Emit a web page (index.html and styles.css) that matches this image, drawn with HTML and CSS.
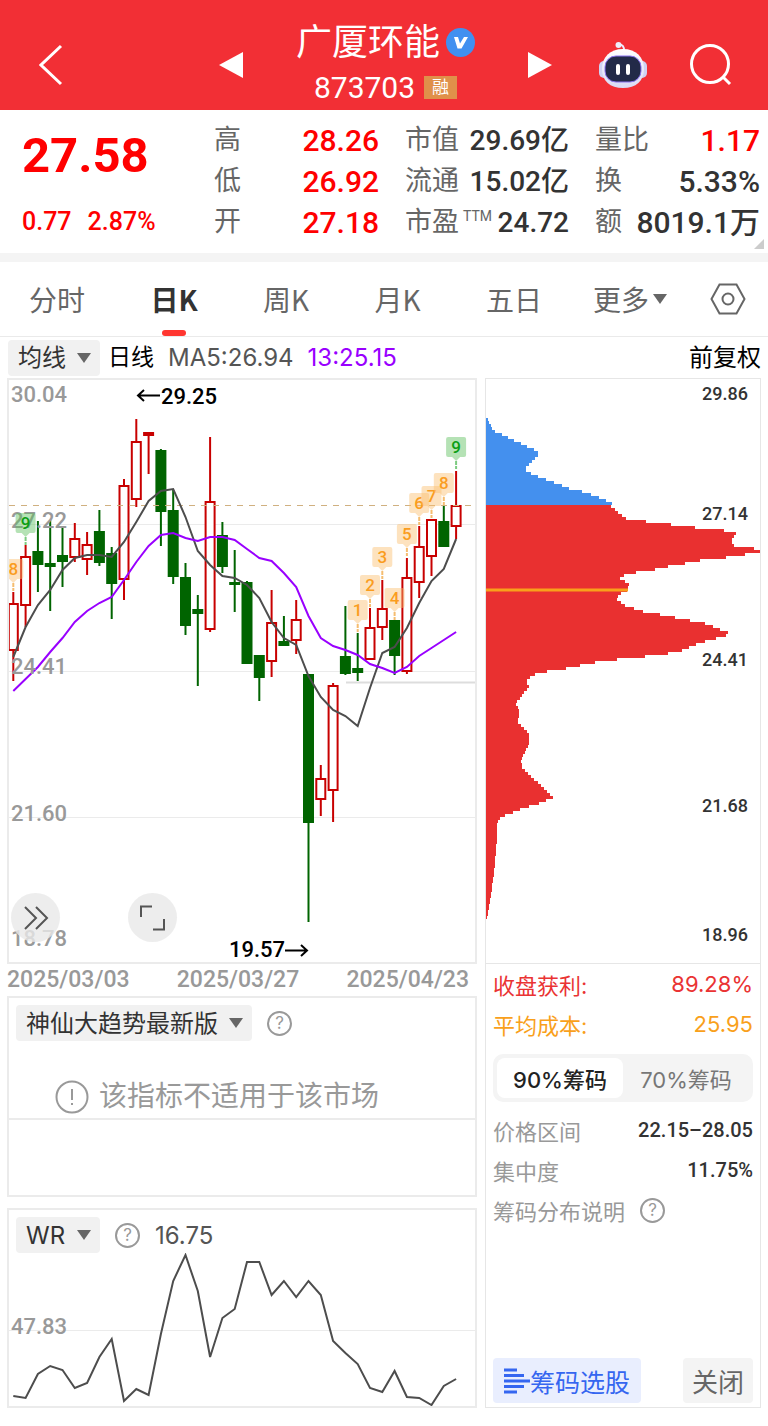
FILE: index.html
```html
<!DOCTYPE html>
<html lang="zh-CN">

<head>
    <meta charset="UTF-8">
    <meta name="viewport" content="width=device-width, initial-scale=1">
    <title>广厦环能 873703</title>
    <link rel="stylesheet" href="styles.css">
</head>

<body>
    <header class="topbar">
        <a class="back" href="#" aria-label="返回">
            <svg width="24" height="42" viewBox="0 0 24 42"><path d="M22 2 2 21 22 40" /></svg>
        </a>
        <div class="stock-nav">
            <button class="step" aria-label="上一只"><svg width="24" height="26" viewBox="0 0 24 26"><path d="M24 0V26L0 13Z" /></svg></button>
            <div class="stock">
                <div class="stock-line">
                    <h1>广厦环能</h1>
                    <svg class="verified" width="29" height="29" viewBox="0 0 29 29">
                        <circle cx="14.5" cy="14.5" r="14.5" fill="#4190f0" />
                        <path d="M8 9H12L14 15.500 18 9H22L15.500 20.500H11.500Z" fill="#fff" />
                    </svg>
                </div>
                <div class="stock-line"><span class="code">873703</span><span class="tag">融</span></div>
            </div>
            <button class="step" aria-label="下一只"><svg width="24" height="26" viewBox="0 0 24 26"><path d="M0 0V26L24 13Z" /></svg></button>
        </div>
        <div class="actions">
            <button aria-label="智能助手">
                <svg width="50" height="48" viewBox="0 0 50 48">
                    <defs>
                        <linearGradient id="shell" x1="0" y1="0" x2="0" y2="1">
                            <stop offset="0" stop-color="#fff" />
                            <stop offset="1" stop-color="#d9daf4" />
                        </linearGradient>
                    </defs>
                    <path d="M26 11C27 6 24 3 20.500 3.500" fill="none" stroke="#eef" stroke-width="2" />
                    <circle cx="20.500" cy="4" r="3" fill="#eeeefb" />
                    <rect x="1" y="20" width="10" height="17" rx="5" fill="#cfd2f2" />
                    <rect x="39" y="20" width="10" height="17" rx="5" fill="#cfd2f2" />
                    <path d="M25 8C38 8 46 16 46 28S38 47 25 47 4 40 4 28 12 8 25 8Z" fill="url(#shell)" />
                    <rect x="7" y="15" width="36" height="26" rx="11" fill="#222a48" stroke="#8a72ee" stroke-width="1" />
                    <path d="M20 25V32M30 25V32" stroke="#fff" stroke-width="4" stroke-linecap="round" />
                </svg>
            </button>
            <button aria-label="搜索">
                <svg class="search" width="42" height="42" viewBox="0 0 42 42"><circle cx="20" cy="20" r="18.500" /><path d="M33 33 40 40" /></svg>
            </button>
        </div>
    </header>

    <section class="quote">
        <div class="price">
            <strong>27.58</strong>
            <div class="change"><span>0.77</span><span>2.87%</span></div>
        </div>
        <dl class="big up">
            <div><dt>高</dt><dd>28.26</dd></div>
            <div><dt>低</dt><dd>26.92</dd></div>
            <div><dt>开</dt><dd>27.18</dd></div>
        </dl>
        <dl>
            <div><dt>市值</dt><dd>29.69亿</dd></div>
            <div><dt>流通</dt><dd>15.02亿</dd></div>
            <div><dt>市盈<sup>TTM</sup></dt><dd>24.72</dd></div>
        </dl>
        <dl class="big">
            <div><dt>量比</dt><dd class="red">1.17</dd></div>
            <div><dt>换</dt><dd>5.33%</dd></div>
            <div><dt>额</dt><dd>8019.1万</dd></div>
        </dl>
    </section>

    <nav class="tabs">
        <div class="periods">
            <button>分时</button>
            <button class="active">日K</button>
            <button>周K</button>
            <button>月K</button>
            <button>五日</button>
        </div>
        <button class="more">更多<i class="caret"></i></button>
        <button class="settings" aria-label="设置">
            <svg width="36" height="32" viewBox="0 0 36 32"><path d="M9.500 1.500H26.500L34.500 16 26.500 30.500H9.500L1.500 16Z" /><circle cx="18" cy="16" r="5.500" /></svg>
        </button>
    </nav>

    <div class="toolbar">
        <label class="picker"><select aria-label="主图指标"><option>均线</option></select></label>
        <span class="cycle">日线</span>
        <span class="ma5">MA5:26.94</span>
        <span class="ma13">13:25.15</span>
        <span class="adjust">前复权</span>
    </div>

    <main class="board">
        <div class="left">
            <div class="panel kline">
                <svg id="kline" viewBox="9 380 466 582">
                    <path class="grid" d="M9 524.500H475M9 671.500H475M9 817.500H475" />
                    <path class="support" d="M346 682.500H475" />
                    <g id="candles"></g>
                    <path class="current" d="M9 505.500H475" />
                    <polyline class="line" id="lineMa5" />
                    <polyline class="line violet" id="lineMa13" />
                    <g class="axis">
                        <text x="11" y="402">30.04</text>
                        <text x="11" y="528">27.22</text>
                        <text x="11" y="674">24.41</text>
                        <text x="11" y="821">21.60</text>
                        <text x="11" y="946">18.78</text>
                    </g>
                    <g id="marks"></g>
                    <g class="extreme">
                        <text x="161" y="404">29.25</text>
                        <path d="M160 395.500H138M144 390 138 395.500 144 401" />
                        <text x="229" y="957">19.57</text>
                        <path d="M285 950.500H307M301 945 307 950.500 301 956" />
                    </g>
                </svg>
                <div class="float">
                    <button aria-label="展开"><svg width="49" height="49" viewBox="0 0 49 49"><path d="M14 14 25 25 14 36M25 14 36 25 25 36" /></svg></button>
                    <button aria-label="全屏"><svg width="49" height="49" viewBox="0 0 49 49"><path d="M13 24V13.500H24M36 26V36.500H25" /></svg></button>
                </div>
            </div>
            <div class="dates"><span>2025/03/03</span><span>2025/03/27</span><span>2025/04/23</span></div>

            <div class="panel trend">
                <div class="panel-head">
                    <label class="picker"><select aria-label="副图指标一"><option>神仙大趋势最新版</option></select></label>
                    <button class="help" aria-label="指标说明">?</button>
                </div>
                <p class="notice">
                    <svg width="34" height="34" viewBox="0 0 34 34"><circle cx="17" cy="17" r="15.500" /><path d="M17 9V20M17 23V25" /></svg>
                    该指标不适用于该市场
                </p>
            </div>

            <div class="panel">
                <div class="panel-head">
                    <label class="picker"><select aria-label="副图指标二"><option>WR</option></select></label>
                    <button class="help" aria-label="WR说明">?</button>
                    <span class="wr-value">16.75</span>
                </div>
                <svg viewBox="9 1254 466 153">
                    <path class="grid" d="M9 1331.500H475" />
                    <g class="axis"><text x="11" y="1335">47.83</text></g>
                    <polyline class="line" id="lineWr" />
                </svg>
            </div>
        </div>

        <aside class="chips">
            <svg viewBox="486 379 274 584">
                <path id="chipsAbove" class="above" />
                <path id="chipsBelow" class="below" />
                <path class="cost" d="M486 590H628" />
                <g class="levels">
                    <text x="748" y="400">29.86</text>
                    <text x="748" y="520">27.14</text>
                    <text x="748" y="666">24.41</text>
                    <text x="748" y="812">21.68</text>
                    <text x="748" y="941">18.96</text>
                </g>
            </svg>
            <div class="chips-info">
                <div class="row profit"><span>收盘获利:</span><span>89.28%</span></div>
                <div class="row cost-row"><span>平均成本:</span><span>25.95</span></div>
                <div class="segment">
                    <button class="on">90%筹码</button>
                    <button>70%筹码</button>
                </div>
                <div class="row"><span>价格区间</span><b>22.15–28.05</b></div>
                <div class="row"><span>集中度</span><b>11.75%</b></div>
                <div class="row explain"><span>筹码分布说明</span><button class="help" aria-label="筹码分布说明">?</button></div>
            </div>
            <div class="chips-foot">
                <button class="pick">
                    <svg width="26" height="26" viewBox="0 0 26 26"><path d="M0 2H13M0 7.500H20M0 13H26M0 18.500H20M0 24H13" /></svg>筹码选股
                </button>
                <button class="close">关闭</button>
            </div>
        </aside>
    </main>
    <script src="chart.js"></script>
</body>

</html>
```
FILE: styles.css
```css
* {
    box-sizing: border-box;
}

body {
    margin: 0;
    background: #fff;
    color: #333;
    font-family: Roboto, "Noto Sans CJK SC", sans-serif;
}

button {
    border: 0;
    padding: 0;
    background: none;
    color: inherit;
    font: inherit;
    cursor: pointer;
}

svg {
    display: block;
}

/* header */
.topbar {
    display: grid;
    grid-template-columns: 1fr 334px 1fr;
    align-items: center;
    padding: 20px 36px 0 39px;
    background: #f22f35;
    color: #fff;
}

.back path,
.search {
    fill: none;
    stroke: #fff;
    stroke-width: 3;
}

.stock-nav,
.stock-line,
.actions {
    display: flex;
    align-items: center;
}

.stock-nav {
    justify-content: space-between;
}

.step svg {
    fill: #fff;
}

.stock-line {
    justify-content: center;
    height: 45px;
    gap: 6px;
}

h1 {
    margin: 0;
    font-size: 36px;
    font-weight: 400;
    line-height: 48px;
}

.code {
    font-size: 30px;
}

.tag {
    margin-left: 3px;
    padding: 0 8px;
    background: #e0904a;
    font-size: 17px;
    line-height: 23px;
}

.actions {
    justify-content: flex-end;
    gap: 42px;
}

/* quote */
.quote {
    position: relative;
    display: grid;
    grid-template-columns: 166fr 165fr 164fr 165fr;
    column-gap: 26px;
    padding: 10px 8px 10px 22px;
    border-bottom: 9px solid #f4f4f4;
}

.quote::after {
    content: "";
    position: absolute;
    right: 4px;
    bottom: 4px;
    border: 5px solid;
    border-color: transparent #ccc #ccc transparent;
}

.price {
    color: #f00;
    font-weight: 500;
}

.price strong {
    display: block;
    font-size: 49px;
    font-weight: 700;
    line-height: 72px;
}

.change {
    display: flex;
    gap: 16px;
    padding-top: 9px;
    font-size: 25px;
    line-height: 41px;
}

dl {
    margin: 0;
    line-height: 41px;
}

dl div {
    display: flex;
    justify-content: space-between;
    height: 41px;
    white-space: nowrap;
}

dt {
    color: #666;
    font-size: 27px;
}

dd {
    margin: 0;
    font-size: 28px;
    font-weight: 500;
}

.big dd {
    font-size: 30px;
}

.up dd,
dd.red {
    color: #f00;
}

sup {
    margin-left: 4px;
    font-size: 14px;
    line-height: 0;
}

/* tabs */
.tabs {
    display: flex;
    align-items: center;
    height: 75px;
    padding: 0 22px 0 29px;
    border-bottom: 1px solid #eaeaea;
    color: #666;
    font-family: "Noto Sans CJK SC", sans-serif;
    font-size: 28px;
}

.periods {
    display: flex;
    flex: 1;
    justify-content: space-between;
    height: 100%;
}

.periods .active {
    position: relative;
    color: #333;
    font-weight: 700;
}

.periods .active::after {
    content: "";
    position: absolute;
    left: 50%;
    bottom: 0;
    width: 24px;
    height: 6px;
    margin-left: -12px;
    border-radius: 3px;
    background: #ff3630;
}

.more {
    display: flex;
    align-items: center;
    gap: 4px;
    margin: 0 43px 0 51px;
}

.caret,
.picker::after {
    border: 7px solid transparent;
    border-top: 10px solid #666;
    border-bottom: 0;
}

.settings svg {
    fill: none;
    stroke: #666;
    stroke-width: 2;
}

/* indicator bar */
.toolbar {
    display: flex;
    align-items: center;
    height: 41px;
    padding: 0 7px 0 8px;
    font-size: 24px;
    line-height: 36px;
}

.picker {
    position: relative;
    display: block;
}

.picker::after {
    content: "";
    position: absolute;
    top: 13px;
    right: 9px;
    pointer-events: none;
}

.picker select {
    display: block;
    height: 36px;
    padding: 0 34px 0 10px;
    border: 0;
    border-radius: 4px;
    appearance: none;
    background: #f1f1f1;
    color: #333;
    font-family: Inter, "Noto Sans CJK SC", sans-serif;
    font-size: 24px;
}

.cycle {
    margin-left: 8px;
    color: #000;
    font-size: 23px;
}

.ma5,
.ma13 {
    margin-left: 14px;
    color: #555;
    font-family: Inter, sans-serif;
    font-size: 24px;
}

.ma13 {
    color: #90f;
}

.adjust {
    margin-left: auto;
    color: #000;
}

/* charts */
.board {
    display: grid;
    grid-template-columns: 470fr 276fr;
    gap: 8px;
    padding: 0 7px 17px;
}

.panel {
    border: 2px solid #ebebeb;
}

.kline {
    position: relative;
}

.grid {
    stroke: #ebebeb;
}

.support {
    stroke: #ddd;
    stroke-width: 2;
}

.current {
    stroke: #d0b080;
    stroke-dasharray: 6 6;
}

.line {
    fill: none;
    stroke: #4d4d4d;
    stroke-width: 2;
}

.violet {
    stroke: #90f;
}

.rise {
    fill: #fff;
    stroke: #c80000;
    stroke-width: 2;
}

.fall {
    fill: #006400;
    stroke: #006400;
    stroke-width: 2;
}

.axis {
    fill: #999;
    font-size: 22px;
    font-weight: 500;
}

.extreme {
    fill: #000;
    font-size: 22px;
    font-weight: 500;
}

.extreme path {
    fill: none;
    stroke: #000;
    stroke-width: 2;
}

.mark {
    fill: #fa9d1f;
    font-size: 17px;
    font-weight: 500;
    text-anchor: middle;
}

.mark path {
    fill: rgba(251, 190, 110, 0.45);
}

.mark line {
    stroke: #f5bd70;
    stroke-width: 2;
    stroke-dasharray: 4 1;
}

.mark.nine {
    fill: #0a9e14;
}

.mark.nine path {
    fill: rgba(90, 190, 90, 0.45);
}

.mark.nine line {
    stroke: #7ccb80;
}

.float {
    position: absolute;
    left: 2px;
    bottom: 20px;
    display: flex;
    gap: 68px;
}

.float button {
    border-radius: 50%;
    background: rgba(232, 232, 232, 0.8);
}

.float path {
    fill: none;
    stroke: #555;
    stroke-width: 2;
}

.dates {
    display: flex;
    justify-content: space-between;
    padding-right: 8px;
    color: #999;
    font-size: 23px;
    font-weight: 500;
    line-height: 32px;
}

.trend {
    height: 201px;
    margin-bottom: 11px;
}

.panel-head {
    display: flex;
    align-items: center;
    padding: 7px 7px 0;
}

.help {
    width: 25px;
    height: 25px;
    margin-left: 15px;
    border: 2px solid #999;
    border-radius: 50%;
    color: #999;
    font-family: Inter, sans-serif;
    font-size: 17px;
    line-height: 21px;
}

.notice {
    display: flex;
    align-items: center;
    gap: 10px;
    height: 79px;
    margin: 0;
    padding: 34px 0 0 46px;
    border-bottom: 2px solid #ebebeb;
    color: #999;
    font-size: 28px;
    line-height: 44px;
}

.notice svg {
    fill: none;
    stroke: #999;
    stroke-width: 2;
}

.wr-value {
    margin-left: 15px;
    color: #555;
    font-family: Inter, sans-serif;
    font-size: 24px;
}

/* chip distribution */
.chips {
    display: flex;
    flex-direction: column;
    border: 1px solid #e6e6e6;
}

.above {
    fill: #4490ee;
}

.below {
    fill: #e93030;
}

.cost {
    stroke: #f9a01b;
    stroke-width: 3;
}

.levels {
    fill: #333;
    font-size: 18px;
    font-weight: 500;
    text-anchor: end;
}

.chips-info {
    flex: 1;
    padding: 0 7px;
    border-top: 1px solid #e6e6e6;
}

.row {
    display: flex;
    justify-content: space-between;
    align-items: center;
    height: 40px;
    color: #999;
    font-size: 22px;
}

.row b {
    color: #333;
    font-size: 20px;
    font-weight: 500;
}

.profit,
.cost-row {
    font-family: Inter, "Noto Sans CJK SC", sans-serif;
}

.profit {
    color: #ea3333;
}

.cost-row {
    color: #f9a01b;
}

.segment {
    display: flex;
    height: 48px;
    margin: 10px 0 8px;
    padding: 4px;
    border-radius: 10px;
    background: #f4f4f4;
    color: #777;
    font-family: Inter, "Noto Sans CJK SC", sans-serif;
    font-size: 22px;
}

.segment button {
    flex: 1;
    border-radius: 8px;
}

.segment .on {
    background: #fff;
    color: #222;
    font-weight: 500;
}

.explain {
    justify-content: flex-start;
}

.chips-foot {
    display: flex;
    justify-content: space-between;
    padding: 0 7px 4px;
}

.pick,
.close {
    display: flex;
    align-items: center;
    height: 45px;
    padding: 0 11px;
    border-radius: 4px;
    background: #e9eefe;
    color: #3566f0;
    font-size: 25px;
    white-space: nowrap;
}

.pick path {
    stroke: #3566f0;
    stroke-width: 3;
}

.close {
    padding: 0 9px;
    background: #f4f4f4;
    color: #666;
    font-size: 26px;
}
```
FILE: chart.js
```javascript
// high, body top, body bottom, low, rising
const candles = [
    [592, 603, 651, 681, 1], [545, 556, 606, 627, 1], [521, 551, 565, 592, 0], [520, 563, 567, 611, 0],
    [528, 555, 562, 587, 0], [523, 538, 558, 562, 1], [532, 544, 560, 575, 1], [510, 531, 563, 566, 0],
    [547, 553, 584, 619, 0], [479, 485, 580, 600, 1], [419, 441, 500, 507, 1], [432, 432, 436, 474, 1],
    [449, 450, 512, 546, 0], [490, 510, 577, 584, 0], [563, 577, 626, 635, 0], [595, 609, 614, 686, 0],
    [437, 501, 630, 632, 1], [522, 535, 567, 573, 0], [550, 582, 584, 612, 0], [581, 582, 664, 664, 0],
    [655, 655, 678, 701, 0], [590, 622, 662, 677, 1], [616, 641, 646, 646, 0], [600, 619, 641, 654, 1],
    [674, 674, 823, 922, 0], [765, 778, 800, 816, 1], [683, 685, 791, 822, 1], [606, 656, 674, 675, 0],
    [633, 668, 673, 681, 0], [608, 627, 660, 660, 1], [580, 608, 628, 640, 1], [620, 620, 656, 675, 0],
    [558, 577, 672, 674, 1], [526, 546, 583, 598, 1], [519, 519, 557, 576, 1], [506, 521, 547, 547, 0],
    [471, 505, 527, 539, 1]
];

const ma5 = [657, 627, 605, 590, 570, 558, 555, 555, 557, 542, 522, 501, 491, 489, 517, 551, 565, 576, 578,
    585, 598, 622, 638, 645, 676, 697, 710, 716, 726, 688, 653, 647, 628, 603, 581, 569, 539];

const ma13 = [691, 679, 667, 652, 638, 622, 611, 603, 597, 580, 562, 546, 535, 533, 538, 541, 537, 537, 540,
    549, 558, 561, 573, 587, 616, 638, 646, 650, 655, 664, 668, 673, 667, 656, 648, 640, 632];

const wr = [1397, 1399, 1375, 1367, 1371, 1389, 1384, 1358, 1340, 1402, 1390, 1396, 1335, 1282, 1256, 1292,
    1358, 1319, 1310, 1263, 1263, 1296, 1282, 1298, 1282, 1296, 1342, 1354, 1365, 1389, 1393, 1372, 1398,
    1399, 1406, 1387, 1380];

// candle index, number, top of the bubble
const marks = [[0, 8, 559], [1, 9, 513], [28, 1, 600], [29, 2, 575], [30, 3, 547], [31, 4, 588],
    [32, 5, 524], [33, 6, 493], [34, 7, 486], [35, 8, 473], [36, 9, 437]];

// y, right edge
const chips = [[418, 487], [430, 493], [451, 538], [455, 538], [469, 524], [471, 527], [477, 540], [482, 554],
    [488, 569], [492, 586], [497, 599], [502, 611], [504, 613], [506, 611], [512, 618], [518, 626], [521, 646],
    [523, 663], [526, 687], [529, 712], [531, 736], [534, 736], [540, 731], [546, 735], [548, 754], [551, 760],
    [554, 745], [557, 726], [560, 700], [563, 685], [566, 668], [569, 655], [572, 636], [575, 624], [578, 620],
    [584, 629], [590, 627], [592, 622], [598, 616], [605, 625], [608, 634], [611, 643], [614, 660], [617, 675],
    [620, 690], [623, 705], [627, 715], [630, 723], [633, 731], [637, 720], [641, 705], [645, 693], [650, 682],
    [653, 668], [656, 645], [659, 617], [662, 595], [665, 580], [668, 566], [670, 552], [673, 538], [675, 531],
    [682, 526], [685, 530], [693, 523], [703, 516], [710, 519], [722, 518], [733, 529], [743, 529], [760, 521],
    [767, 522], [797, 553], [802, 542], [809, 520], [813, 510], [817, 500], [823, 497], [833, 497], [852, 496],
    [880, 493], [900, 490], [918, 487]];

const xAt = i => 13.3 + i * 12.3;

function drawLine(id, values) {
    document.getElementById(id).setAttribute("points", values.map((y, i) => `${xAt(i)},${y}`).join(" "));
}

function drawCandles() {
    document.getElementById("candles").innerHTML = candles.map(([high, top, bottom, low, up], i) => {
        const x = xAt(i);
        const height = Math.max(bottom - top - 2, 1);
        return `<g class="${up ? "rise" : "fall"}">
            <path d="M${x} ${high}V${low}" />
            <rect x="${x - 4.5}" y="${top + 1}" width="9" height="${height}" />
        </g>`;
    }).join("");
}

function drawMarks() {
    document.getElementById("marks").innerHTML = marks.map(([i, n, y]) => {
        const x = xAt(i);
        return `<g class="mark ${n === 9 ? "nine" : ""}">
            <path d="M${x - 8} ${y}h16q2 0 2 2v16q0 2-2 2h-4l-4 4-4-4h-4q-2 0-2-2v-16q0-2 2-2Z" />
            <line x1="${x}" x2="${x}" y1="${y + 24}" y2="${y + 32}" />
            <text x="${x}" y="${y + 16}">${n}</text>
        </g>`;
    }).join("");
}

function chipEdge(y) {
    const k = Math.max(chips.findIndex(p => p[0] >= y), 1);
    const [y0, x0] = chips[k - 1];
    const [y1, x1] = chips[k];
    return Math.round(x0 + (x1 - x0) * (y - y0) / (y1 - y0));
}

function drawChips(id, from, to) {
    let d = `M486 ${from}`;
    for (let y = from; y < to; y += 3) {
        d += `H${chipEdge(Math.min(y + 1, 918))}V${Math.min(y + 3, to)}`;
    }
    document.getElementById(id).setAttribute("d", d + "H486Z");
}

drawCandles();
drawLine("lineMa5", ma5);
drawLine("lineMa13", ma13);
drawLine("lineWr", wr);
drawMarks();
drawChips("chipsAbove", 418, 505);
drawChips("chipsBelow", 505, 919);
```
